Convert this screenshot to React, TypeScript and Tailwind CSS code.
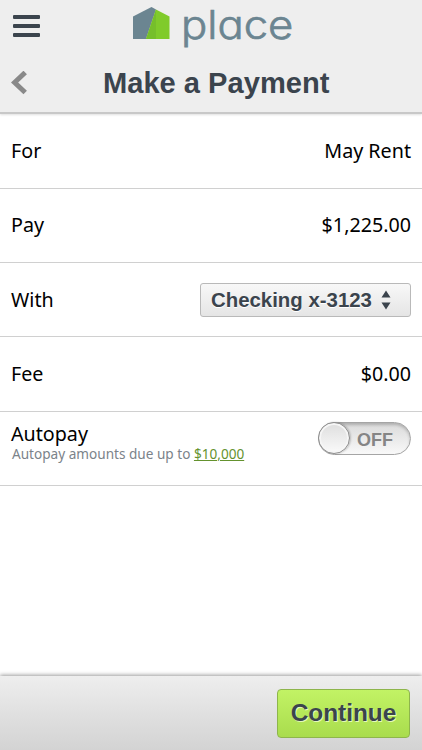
import type { ReactNode } from "react";

function Logo() {
  return (
    <div className="flex items-start gap-[11px]">
      <svg width="37" height="33" viewBox="0 0 37 33" className="mt-[7px]">
        <path d="M0 9.5 18.5 0 23 2.5 13 32H0Z" fill="#6b8591" />
        <path d="M23 2.5 36.5 9.5V32H13Z" fill="#80cb2b" />
        <path d="M23 2.5V32H13Z" fill="#76bf2b" />
      </svg>
      <span className="origin-left scale-x-[1.09] font-['Inter',sans-serif] text-[40px] leading-[49px] font-light text-[#6b8591] [-webkit-text-stroke:0.7px_#6b8591] [font-feature-settings:'cv11']">
        place
      </span>
    </div>
  );
}

function Row({ label, children }: { label: string; children: ReactNode }) {
  return (
    <div className="flex h-[74.3px] items-center justify-between border-b border-[#d0d0d0] px-[11px]">
      <span>{label}</span>
      {children}
    </div>
  );
}

export default function App() {
  return (
    <div className="flex h-[750px] w-[422px] flex-col overflow-hidden bg-white font-['Noto_Sans',sans-serif] text-[19.7px] leading-6 text-black">
      <header className="h-[114.4px] shrink-0 border-b-2 border-[#c8c8c8] bg-[#eee] shadow-[0_1px_2px_rgba(0,0,0,0.12)]">
        <div className="flex h-[52px] items-start">
          <button className="mt-[15px] ml-[13px] flex w-[27px] flex-col gap-[5px]" aria-label="Menu">
            <span className="h-1 w-full rounded-[1px] bg-[#3b444d]" />
            <span className="h-1 w-full rounded-[1px] bg-[#3b444d]" />
            <span className="h-1 w-full rounded-[1px] bg-[#3b444d]" />
          </button>
          <div className="ml-[93px]">
            <Logo />
          </div>
        </div>
        <div className="flex h-[61px] items-center">
          <button className="ml-[11px] w-[17px]" aria-label="Back">
            <svg width="17" height="24" viewBox="0 0 17 24">
              <path d="M14.2 1.5 3.6 11.5 14.2 21.5" fill="none" stroke="#898989" strokeWidth="5" />
            </svg>
          </button>
          <h1 className="ml-[75px] whitespace-nowrap font-['Liberation_Sans',Arial,sans-serif] text-[29.1px] font-bold text-[#3b444d]">
            Make a Payment
          </h1>
        </div>
      </header>

      <main className="flex-1">
        <Row label="For"><span>May Rent</span></Row>
        <Row label="Pay"><span>$1,225.00</span></Row>
        <Row label="With">
          <button className="flex h-[34px] w-[211px] items-center rounded-[3px] border border-[#b9b9b9] bg-gradient-to-b from-[#f8f8f8] to-[#e5e5e5] pl-[10px] font-['Liberation_Sans',Arial,sans-serif] text-[20.4px] font-bold text-[#3b444d] [text-shadow:0_1px_0_white]">
            Checking x-3123
            <svg width="10" height="20" viewBox="0 0 10 20" className="ml-[9px]">
              <path d="M0.5 7.5 5 0.5 9.5 7.5ZM0.5 12.5 5 19.5 9.5 12.5Z" fill="#3b444d" />
            </svg>
          </button>
        </Row>
        <Row label="Fee"><span>$0.00</span></Row>
        <div className="flex h-[74.3px] items-start justify-between border-b border-[#d0d0d0] px-[11px] pt-[10px]">
          <div>
            <div>Autopay</div>
            <div className="pl-px text-[13.6px] leading-[16px] text-[#7b838a]">
              Autopay amounts due up to <a className="text-[#64922e] underline">$10,000</a>
            </div>
          </div>
          <button className="flex h-[33px] w-[93px] items-center rounded-full border border-[#a5a5a5] bg-gradient-to-b from-[#dadada] to-[#f9f9f9] shadow-[inset_0_2px_3px_rgba(0,0,0,0.2)]">
            <span className="-ml-px size-[32px] shrink-0 rounded-full border border-[#8d8d8d] bg-gradient-to-b from-[#dedede] to-[#fafafa] shadow-[inset_0_0_0_2px_#f6f6f6,1px_0_2px_rgba(0,0,0,0.2)]" />
            <span className="ml-[7px] pt-[3px] font-['Liberation_Sans',Arial,sans-serif] text-[18px] font-bold text-[#858585]">OFF</span>
          </button>
        </div>
      </main>

      <footer className="flex h-[74px] shrink-0 items-center justify-end bg-gradient-to-b from-[#eee] to-[#d3d3d3] pr-3 shadow-[0_-1px_4px_rgba(0,0,0,0.4)]">
        <button className="h-[49px] w-[133px] rounded-[4px] border border-[#8eb54c] bg-gradient-to-b from-[#c2f365] to-[#a9dc4d] font-['Liberation_Sans',Arial,sans-serif] text-[24.4px] font-bold text-[#3b444d] [text-shadow:1px_1px_0_#e4f9bb]">
          Continue
        </button>
      </footer>
    </div>
  );
}
